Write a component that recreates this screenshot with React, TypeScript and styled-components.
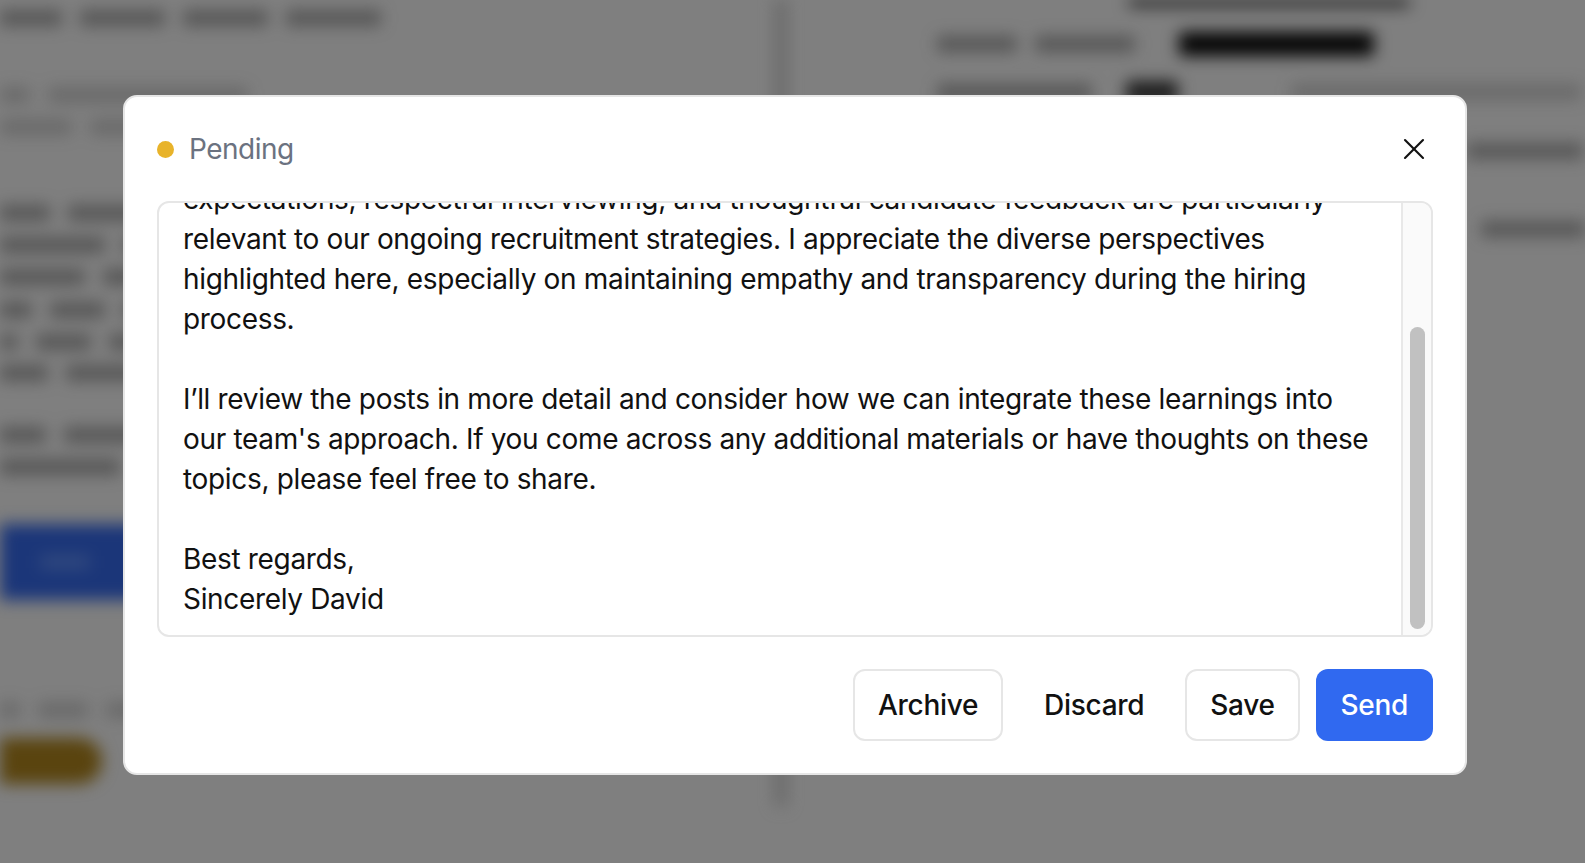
import styled, { createGlobalStyle } from 'styled-components';
import { X } from 'lucide-react';

const GlobalStyle = createGlobalStyle`
  html,
  body {
    margin: 0;
    padding: 0;
    background: #7f7f7f;
    font-family: Inter, 'Liberation Sans', sans-serif;
  }

  * {
    box-sizing: border-box;
  }
`;

const Page = styled.div`
  position: relative;
  width: 100%;
  height: 100vh;
  overflow: hidden;
  background: #7f7f7f;
`;

const Backdrop = styled.div`
  display: grid;
  grid-template-columns: 776px 10px 1fr;
  height: 100%;
  filter: blur(8px);
`;

const LeftColumn = styled.div`
  display: flex;
  flex-direction: column;
  overflow: hidden;
`;

const Divider = styled.div`
  height: 806px;
  background: #666;
`;

const RightColumn = styled.div`
  display: flex;
  flex-direction: column;
  padding-left: 151px;
  overflow: hidden;
`;

const Row = styled.div<{ $top: number }>`
  display: flex;
  flex-shrink: 0;
  align-items: center;
  gap: 18px;
  margin-top: ${(p) => p.$top}px;
`;

const tones = {
  faint: 'rgba(55, 55, 55, 0.3)',
  gray: 'rgba(45, 45, 45, 0.5)',
  dark: '#1c1c1c',
  black: '#050505',
};

const Segment = styled.div<{ $width: number; $height?: number; $tone?: keyof typeof tones; $left?: number }>`
  flex-shrink: 0;
  width: ${(p) => p.$width}px;
  height: ${(p) => p.$height ?? 16}px;
  margin-left: ${(p) => p.$left ?? 0}px;
  border-radius: 4px;
  background: ${(p) => tones[p.$tone ?? 'gray']};
`;

const BlueButton = styled.div`
  display: flex;
  flex-shrink: 0;
  align-items: center;
  width: 300px;
  height: 76px;
  margin-top: 49px;
  padding-left: 40px;
  background: #1b3679;
`;

const BlueLabel = styled.div`
  width: 50px;
  height: 14px;
  background: #31497f;
`;

const YellowPill = styled.div`
  flex-shrink: 0;
  width: 142px;
  height: 46px;
  margin-top: 20px;
  margin-left: -40px;
  border-radius: 23px;
  background: #5a440f;
`;

const Overlay = styled.div`
  position: absolute;
  inset: 0;
  display: flex;
  align-items: flex-start;
  padding: 95px 0 0 123px;
`;

const Modal = styled.div`
  display: flex;
  flex-direction: column;
  width: 1344px;
  height: 680px;
  padding: 32px;
  border: 2px solid #e6e6e6;
  border-radius: 14px;
  background: #fff;
`;

const Header = styled.div`
  display: flex;
  align-items: center;
  justify-content: space-between;
  height: 40px;
  margin-bottom: 32px;
`;

const Status = styled.div`
  display: flex;
  align-items: center;
  gap: 15px;
  font-size: 28px;
  line-height: 40px;
  letter-spacing: -0.5px;
  color: #6b7280;
`;

const Dot = styled.span`
  width: 17px;
  height: 17px;
  border-radius: 50%;
  background: #e8b32a;
`;

const CloseButton = styled.button`
  display: flex;
  align-items: center;
  justify-content: center;
  width: 36px;
  height: 36px;
  margin-right: 1px;
  padding: 0;
  border: 0;
  background: none;
  color: #111;
`;

const TextBox = styled.div`
  display: flex;
  height: 436px;
  overflow: hidden;
  border: 2px solid #e6e6e6;
  border-radius: 12px;
`;

const MessageBody = styled.div`
  display: flex;
  flex: 1;
  flex-direction: column;
  justify-content: flex-end;
  padding: 0 24px 16px;
  overflow: hidden;
  font-size: 28px;
  line-height: 40px;
  letter-spacing: -0.33px;
  color: #111;
`;

const Paragraph = styled.p`
  flex-shrink: 0;
  margin: 0 0 40px;

  &:last-child {
    margin-bottom: 0;
  }
`;

const ScrollTrack = styled.div`
  display: flex;
  flex-direction: column;
  justify-content: flex-end;
  width: 30px;
  padding: 0 6px 6px 7px;
  border-left: 2px solid #e8e8e8;
  background: #fafafa;
`;

const ScrollThumb = styled.div`
  height: 302px;
  border-radius: 8px;
  background: #c1c1c1;
`;

const Footer = styled.div`
  display: flex;
  justify-content: flex-end;
  gap: 16px;
  margin-top: 32px;
`;

const Button = styled.button<{ $variant: 'outline' | 'ghost' | 'primary' }>`
  height: 72px;
  padding: 0 23px;
  border: 2px solid ${(p) => (p.$variant === 'outline' ? '#e6e6e6' : 'transparent')};
  border-radius: 12px;
  background: ${(p) => (p.$variant === 'primary' ? '#3069f0' : '#fff')};
  color: ${(p) => (p.$variant === 'primary' ? '#fff' : '#111')};
  font-family: inherit;
  font-size: 28px;
  font-weight: 500;
  letter-spacing: -0.31px;
`;

const App = () => {
  return (
    <Page>
      <GlobalStyle />
      <Backdrop>
        <LeftColumn>
          <Row $top={10}>
            <Segment $width={62} />
            <Segment $width={85} />
            <Segment $width={85} />
            <Segment $width={95} />
          </Row>
          <Row $top={61}>
            <Segment $width={30} $tone="faint" />
            <Segment $width={200} $tone="faint" />
          </Row>
          <Row $top={16}>
            <Segment $width={72} $tone="faint" />
            <Segment $width={200} $tone="faint" />
          </Row>
          <Row $top={70}>
            <Segment $width={50} />
            <Segment $width={200} />
          </Row>
          <Row $top={16}>
            <Segment $width={105} />
            <Segment $width={200} />
          </Row>
          <Row $top={16}>
            <Segment $width={85} />
            <Segment $width={200} />
          </Row>
          <Row $top={17}>
            <Segment $width={32} />
            <Segment $width={55} />
            <Segment $width={200} />
          </Row>
          <Row $top={16}>
            <Segment $width={18} />
            <Segment $width={55} />
            <Segment $width={200} />
          </Row>
          <Row $top={15}>
            <Segment $width={48} />
            <Segment $width={200} />
          </Row>
          <Row $top={46}>
            <Segment $width={46} />
            <Segment $width={200} />
          </Row>
          <Row $top={16}>
            <Segment $width={120} />
          </Row>
          <BlueButton>
            <BlueLabel />
          </BlueButton>
          <Row $top={102}>
            <Segment $width={20} $tone="faint" />
            <Segment $width={50} $tone="faint" />
            <Segment $width={200} $tone="faint" />
          </Row>
          <YellowPill />
        </LeftColumn>
        <Divider />
        <RightColumn>
          <Row $top={-8}>
            <Segment $width={282} $height={14} $tone="black" $left={191} />
          </Row>
          <Row $top={26}>
            <Segment $width={80} />
            <Segment $width={100} />
            <Segment $width={195} $height={24} $tone="black" $left={26} />
          </Row>
          <Row $top={25}>
            <Segment $width={155} />
            <Segment $width={52} $height={22} $tone="dark" $left={16} />
            <Segment $width={290} $tone="faint" $left={95} />
          </Row>
          <Row $top={40}>
            <Segment $width={116} $left={530} />
          </Row>
          <Row $top={62}>
            <Segment $width={116} $left={544} />
          </Row>
        </RightColumn>
      </Backdrop>
      <Overlay>
        <Modal>
          <Header>
            <Status>
              <Dot />
              Pending
            </Status>
            <CloseButton aria-label="Close">
              <X size={36} strokeWidth={1.4} />
            </CloseButton>
          </Header>
          <TextBox>
            <MessageBody>
              <Paragraph>
                expectations, respectful interviewing, and thoughtful candidate feedback are particularly
                relevant to our ongoing recruitment strategies. I appreciate the diverse perspectives
                highlighted here, especially on maintaining empathy and transparency during the hiring
                process.
              </Paragraph>
              <Paragraph>
                I’ll review the posts in more detail and consider how we can integrate these learnings into
                our team's approach. If you come across any additional materials or have thoughts on these
                topics, please feel free to share.
              </Paragraph>
              <Paragraph>
                Best regards,
                <br />
                Sincerely David
              </Paragraph>
            </MessageBody>
            <ScrollTrack>
              <ScrollThumb />
            </ScrollTrack>
          </TextBox>
          <Footer>
            <Button $variant="outline">Archive</Button>
            <Button $variant="ghost">Discard</Button>
            <Button $variant="outline">Save</Button>
            <Button $variant="primary">Send</Button>
          </Footer>
        </Modal>
      </Overlay>
    </Page>
  );
};

export default App;
